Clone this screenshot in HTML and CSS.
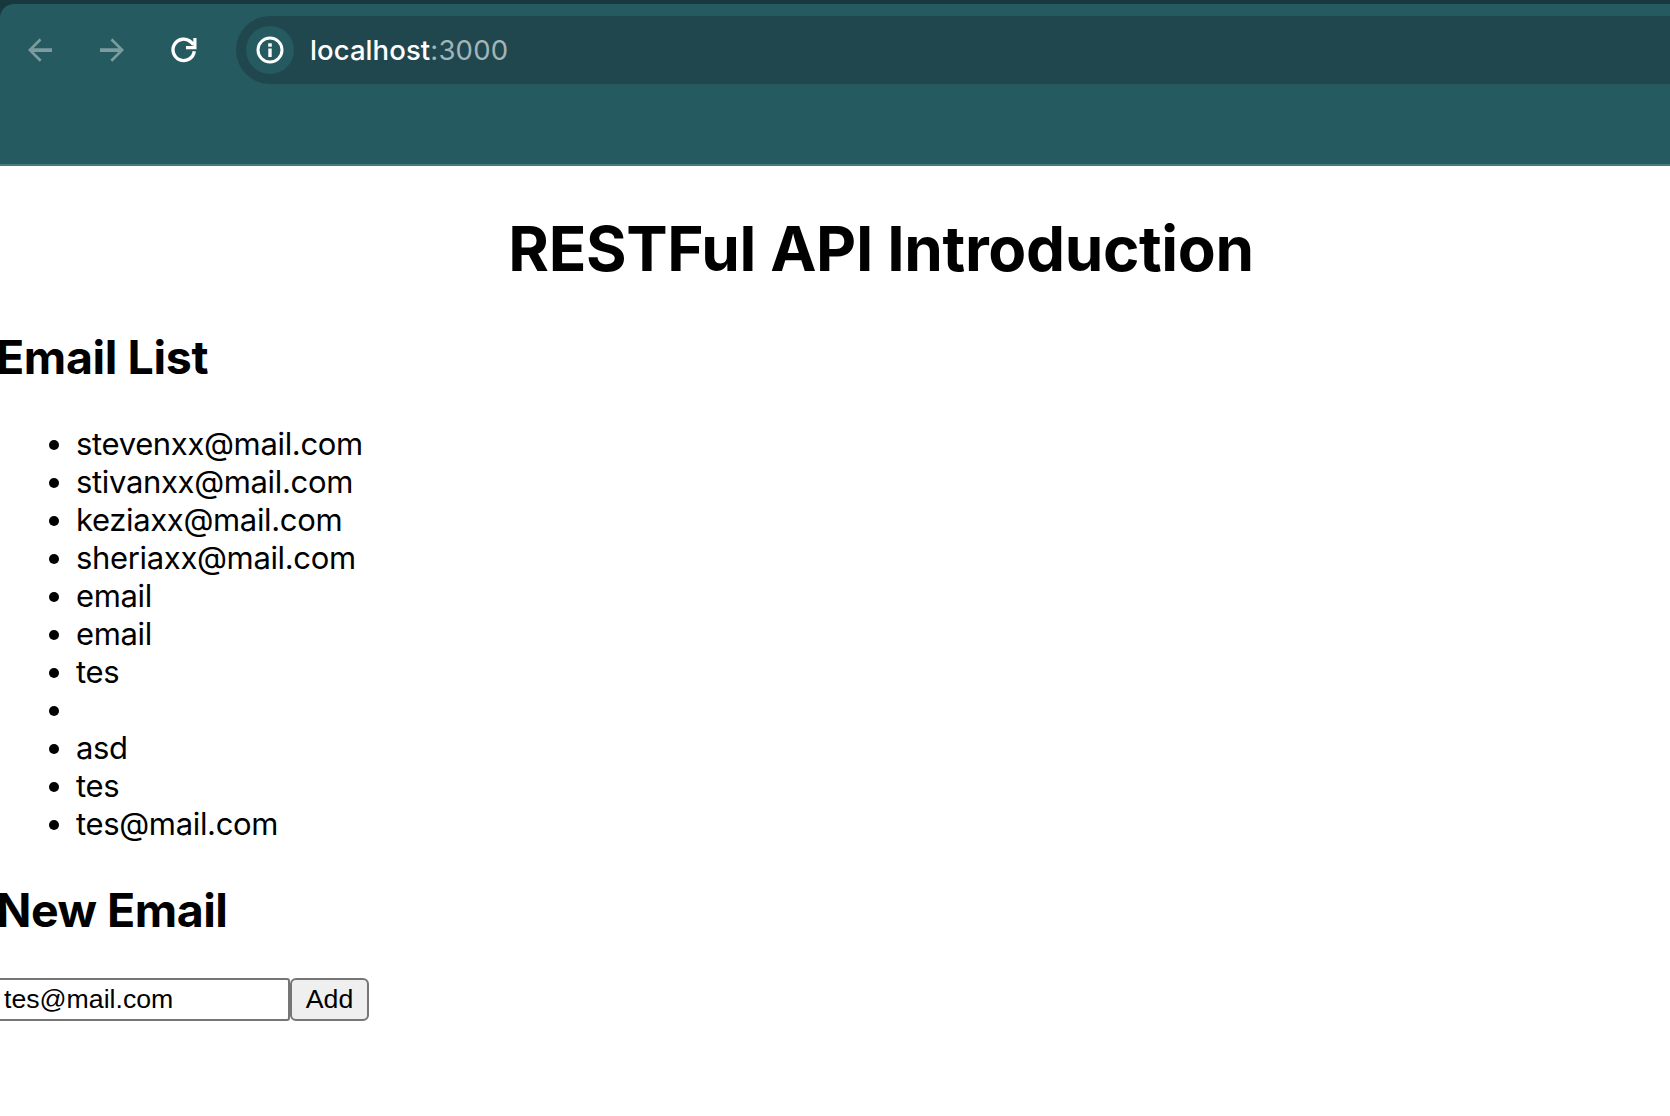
FILE: index.html
```html
<!DOCTYPE html>
<html lang="en">
<head>
<meta charset="utf-8">
<title>RESTFul API Introduction</title>
<link rel="stylesheet" href="styles.css">
</head>
<body>
<header class="browser">
  <div class="toolbar">
    <svg class="nav-icon dim" viewBox="0 0 24 24"><path d="M20 10.8H7.7l5.2-5.2L11.8 4.2 4 12l7.8 7.8 1.3-1.35-5.3-5.2H20z"/></svg>
    <svg class="nav-icon dim flip" viewBox="0 0 24 24"><path d="M20 10.8H7.7l5.2-5.2L11.8 4.2 4 12l7.8 7.8 1.3-1.35-5.3-5.2H20z"/></svg>
    <svg class="nav-icon reload" viewBox="0 0 36 36"><path class="stroke" d="M28.3 19.3A10.7 10.7 0 1 1 25.2 10.2L27.5 12.5"/><path d="M30.5 6v11.3H20v-3.4h7.3V6z"/></svg>
    <div class="address">
      <span class="info"><svg viewBox="0 0 48 48"><circle cx="24" cy="24" r="12"/><path d="M22.3 22.5h3.4v8.5h-3.4z"/><path d="M22.2 17.3h3.6v3.4h-3.6z"/></svg></span>
      <span class="url"><span class="host">localhost</span><span class="port">:3000</span></span>
    </div>
  </div>
</header>
<main>
  <h1><span>RESTFul API Introduction</span></h1>
  <h2 class="list-title"><span>Email List</span></h2>
  <ul>
    <li><span>stevenxx@mail.com</span></li>
    <li><span>stivanxx@mail.com</span></li>
    <li><span>keziaxx@mail.com</span></li>
    <li><span>sheriaxx@mail.com</span></li>
    <li><span>email</span></li>
    <li><span>email</span></li>
    <li><span>tes</span></li>
    <li></li>
    <li><span>asd</span></li>
    <li><span>tes</span></li>
    <li><span>tes@mail.com</span></li>
  </ul>
  <h2 class="form-title"><span>New Email</span></h2>
  <form>
    <input type="text" value="tes@mail.com" aria-label="Email">
    <button type="button">Add</button>
  </form>
</main>
</body>
</html>
```
FILE: styles.css
```css
* { box-sizing: border-box; }
body {
  margin: 0;
  height: 1116px;
  overflow: hidden;
  background: #fff;
  color: #000;
  font-family: Inter, sans-serif;
}
.browser {
  height: 166px;
  padding-top: 4px;
  background: #17383d;
}
.toolbar {
  display: flex;
  align-items: flex-start;
  height: 162px;
  padding: 12px 0 0 22px;
  background: #255a60;
  border-bottom: 2px solid #4a7a80;
  border-top-left-radius: 14px;
}
.nav-icon {
  flex: none;
  width: 36px;
  height: 36px;
  margin: 16px 36px 0 0;
  fill: #fff;
}
.dim { fill: #7c9c9f; }
.flip { transform: scaleX(-1); }
.reload { margin-right: 34px; }
.reload .stroke { fill: none; stroke: #fff; stroke-width: 3.4; }
.address {
  flex: 1;
  display: flex;
  align-items: center;
  height: 68px;
  padding-left: 10px;
  border-radius: 34px 0 0 34px;
  background: #21474e;
}
.info {
  width: 48px;
  height: 48px;
  margin-right: 16px;
  border-radius: 50%;
  background: #255a60;
}
.info svg { display: block; fill: #fff; }
.info circle { fill: none; stroke: #fff; stroke-width: 3; }
.url {
  font-size: 27.5px;
  line-height: 34px;
  color: #fff;
}
.host { font-weight: 500; letter-spacing: 0.08px; }
.port { color: #a3b5b8; letter-spacing: 0.2px; }
h1, h2, ul { margin: 0; }
main { padding-top: 45px; }
h1 {
  height: 76px;
  padding-left: 92px;
  text-align: center;
  font-size: 62px;
  line-height: 76px;
  font-weight: 700;
  letter-spacing: -0.36px;
}
h2 {
  height: 58px;
  margin-left: -4px;
  font-size: 46.5px;
  line-height: 58px;
  font-weight: 700;
  letter-spacing: -0.38px;
}
.list-title { margin-top: 41px; }
ul {
  margin-top: 39px;
  padding: 0 0 0 49px;
  list-style: none;
}
li {
  display: flex;
  align-items: center;
  gap: 17px;
  height: 38px;
  font-size: 31px;
  line-height: 38px;
  letter-spacing: -0.34px;
}
li::before {
  content: "";
  width: 10px;
  height: 10px;
  margin-top: 1px;
  border-radius: 50%;
  background: #000;
}
.form-title { margin-top: 38px; letter-spacing: -0.5px; }
form {
  display: flex;
  margin: 39px 0 0 -4px;
}
input, button {
  height: 43px;
  margin: 0;
  border: 2px solid #767676;
  font: 26.67px/30px "Liberation Sans", Arial, sans-serif;
  color: #000;
}
input {
  width: 294px;
  padding: 2px 6px;
  border-radius: 3px;
  background: #fff;
}
button {
  width: 79px;
  padding: 0 0 2px;
  border-radius: 6px;
  background: #efefef;
}
```
